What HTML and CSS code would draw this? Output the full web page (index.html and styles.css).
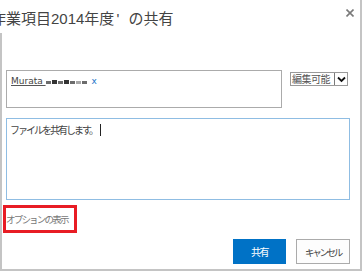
FILE: index.html
```html
<!DOCTYPE html>
<html lang="ja">
<head>
  <meta charset="UTF-8" />
  <title>共有</title>
  <link rel="stylesheet" href="styles.css">
</head>
<body>

<div class="dialog">
  <!-- タイトル -->
  <div class="dialog-head">
    <div class="title">作業項目2014年度<span class="latin">'</span> の共有</div>
    <button class="close" title="閉じる">
      <svg width="8" height="8" viewBox="0 0 8 8"><path d="M0.5 0.5 L7.5 7.5 M7.5 0.5 L0.5 7.5" stroke="#7a7a7a" stroke-width="1.6"/></svg>
    </button>
  </div>

  <div class="dialog-body">
    <!-- ユーザー選択 -->
    <div class="people-row">
      <div class="picker">
        <span class="person">Murata <span class="redact"><i></i><i class="d"></i><i></i><i class="d"></i><i></i><i class="l"></i><i></i></span></span>
        <span class="remove">x</span>
      </div>
      <div class="perm">
        <span class="perm-text">編集可能</span>
        <span class="perm-arrow">
          <svg width="9" height="7" viewBox="0 0 9 7"><path d="M1 1.5 L4.5 5 L8 1.5" stroke="#111" stroke-width="1.8" fill="none"/></svg>
        </span>
      </div>
    </div>

    <!-- メッセージ -->
    <div class="message">ファイルを共有します。<span class="caret"></span></div>

    <div class="options"><a href="#">オプションの表示</a></div>

    <div class="actions">
      <button class="btn primary">共有</button>
      <button class="btn">キャンセル</button>
    </div>
  </div>
</div>

</body>
</html>
```

FILE: styles.css
```css
* { box-sizing: border-box; }
body {
  margin: 0;
  background: #fff;
  font-family: 'Noto Sans CJK JP', sans-serif;
  overflow: hidden;
}
.dialog {
  width: 362px;
  height: 271px;
  border-right: 2px solid #c4c4c4;
  border-bottom: 2px solid #c4c4c4;
  display: flex;
  flex-direction: column;
}
.dialog-head {
  height: 33px;
  display: flex;
  align-items: flex-start;
}
.title {
  flex: 1;
  margin: 9px 0 0 -9px;
  font-family: 'Liberation Sans', 'Noto Sans CJK JP', sans-serif;
  font-size: 15px;
  line-height: 20px;
  color: #444;
  word-spacing: 5px;
  white-space: nowrap;
}
.title .latin {
  font-family: 'Liberation Sans', sans-serif;
  margin-left: 2px;
}
.close {
  border: none;
  background: none;
  padding: 0;
  margin: 9px 6px 0 0;
  width: 8px;
  height: 8px;
  line-height: 0;
  cursor: pointer;
}
.dialog-body {
  flex: 1;
  border-left: 2px solid #c4c4c4;
  padding: 37px 10px 0 4px;
}
.people-row {
  display: flex;
  align-items: flex-start;
}
.picker {
  width: 276px;
  height: 38px;
  border: 1px solid #ababab;
  padding: 4px 4px;
  font-family: 'DejaVu Sans', sans-serif;
  font-size: 9px;
  line-height: 13px;
}
.person {
  color: #444;
  text-decoration: underline;
  text-decoration-color: #555;
}
.redact {
  display: inline-flex;
  align-items: flex-end;
  gap: 1px;
  height: 8px;
  vertical-align: baseline;
}
.redact i {
  display: block;
  width: 5px;
  height: 3px;
  background: #6c6c6c;
}
.redact i.d { background: #333; height: 4px; }
.redact i.l { background: #a8a8a8; }
.remove {
  color: #1b74c9;
  margin-left: 2px;
}
.perm {
  margin: 2px 0 0 8px;
  width: 58px;
  height: 14px;
  border: 1px solid #9a9a9a;
  display: flex;
  align-items: stretch;
}
.perm-text {
  flex: 1;
  font-size: 10px;
  line-height: 12px;
  letter-spacing: -0.5px;
  color: #555;
  padding-left: 1px;
  white-space: nowrap;
}
.perm-arrow {
  width: 13px;
  border-left: 1px solid #7a7a7a;
  display: flex;
  align-items: center;
  justify-content: center;
}
.message {
  margin-top: 10px;
  height: 82px;
  border: 1px solid #8fbde3;
  padding: 4px 3px;
  font-size: 10px;
  line-height: 14px;
  letter-spacing: -2px;
  color: #444;
}
.caret {
  display: inline-block;
  width: 1px;
  height: 12px;
  background: #222;
  margin-left: 3px;
  vertical-align: -2px;
}
.options {
  margin: 5px 0 0 -3px;
  width: 74px;
  height: 28px;
  border: 3px solid #e81c24;
  display: flex;
  align-items: center;
}
.options a {
  font-size: 9.5px;
  letter-spacing: -1.8px;
  color: #777;
  text-decoration: none;
  white-space: nowrap;
}
.actions {
  margin-top: 6px;
  display: flex;
  justify-content: flex-end;
  gap: 10px;
}
.btn {
  height: 25px;
  width: 54px;
  padding: 0;
  border: 1px solid #ababab;
  background: #fdfdfd;
  color: #444;
  font-family: 'Noto Sans CJK JP', sans-serif;
  font-size: 9.5px;
  letter-spacing: -2.3px;
  cursor: pointer;
}
.btn.primary {
  width: 53px;
  background: #0072c6;
  border-color: #0072c6;
  color: #fff;
  font-size: 10px;
  letter-spacing: -1.5px;
}
```
